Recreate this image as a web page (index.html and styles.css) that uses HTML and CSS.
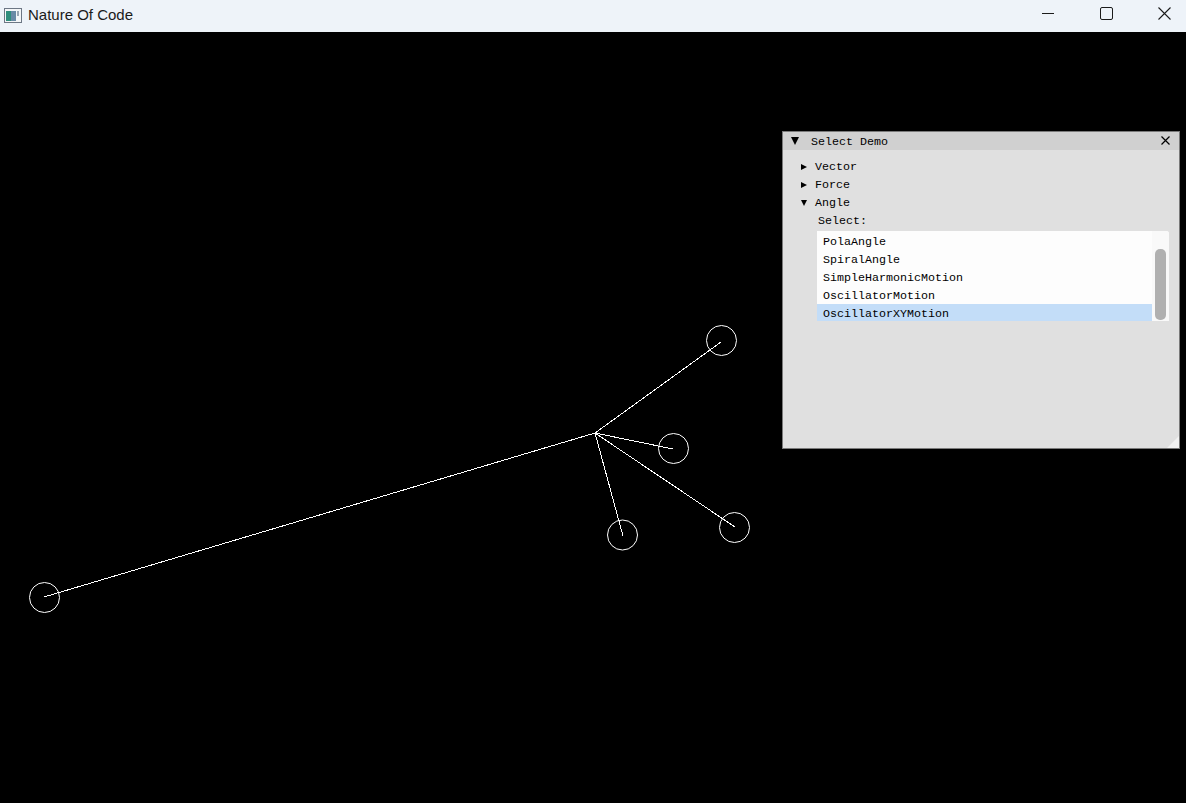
FILE: index.html
```html
<!DOCTYPE html>
<html>
<head>
<meta charset="utf-8">
<title>Nature Of Code</title>
<link rel="stylesheet" href="styles.css">
</head>
<body>
<div class="titlebar">
  <div class="app-icon">
    <svg width="18" height="15" viewBox="0 0 18 15">
      <rect x="0.5" y="0.5" width="17" height="14" fill="#f4f6f8" stroke="#6d7785"/>
      <rect x="2" y="3" width="5" height="10" fill="#2f8e7d"/>
      <rect x="7" y="3" width="5" height="10" fill="#6a8aa6"/>
      <rect x="13" y="3" width="2" height="5" fill="#9aa7b4"/>
    </svg>
  </div>
  <div class="title">Nature Of Code</div>
  <div class="controls">
    <div class="ctl"><svg width="12" height="12" viewBox="0 0 12 12"><path d="M0 6.5 H12" stroke="#1b1b1b" stroke-width="1"/></svg></div>
    <div class="ctl"><svg width="13" height="13" viewBox="0 0 13 13"><rect x="0.5" y="0.5" width="12" height="12" rx="1.5" fill="none" stroke="#1b1b1b" stroke-width="1"/></svg></div>
    <div class="ctl"><svg width="13" height="13" viewBox="0 0 13 13"><path d="M0.5 0.5 L12.5 12.5 M12.5 0.5 L0.5 12.5" stroke="#1b1b1b" stroke-width="1.1"/></svg></div>
  </div>
</div>
<div class="stage">
  <svg class="canvas" width="1186" height="771" viewBox="0 32 1186 771">
    <g stroke="#ffffff" stroke-width="1" fill="none">
      <line x1="595" y1="433" x2="44" y2="597"/>
      <line x1="595" y1="433" x2="721" y2="342"/>
      <line x1="595" y1="433" x2="673" y2="449"/>
      <line x1="595" y1="433" x2="735" y2="527"/>
      <line x1="595" y1="433" x2="623" y2="536"/>
      <circle cx="44.5" cy="597.5" r="15"/>
      <circle cx="721.5" cy="340.5" r="15"/>
      <circle cx="673.5" cy="448.5" r="15"/>
      <circle cx="734.5" cy="527.5" r="15"/>
      <circle cx="622.5" cy="535" r="15"/>
    </g>
  </svg>
  <div class="panel">
    <div class="panel-head">
      <span class="tri-down big"></span>
      <span class="head-text">Select Demo</span>
      <svg class="close" width="9" height="9" viewBox="0 0 9 9"><path d="M0.5 0.5 L8.5 8.5 M8.5 0.5 L0.5 8.5" stroke="#000" stroke-width="1.2"/></svg>
    </div>
    <div class="panel-body">
      <div class="node"><span class="tri-right"></span><span>Vector</span></div>
      <div class="node"><span class="tri-right"></span><span>Force</span></div>
      <div class="node"><span class="tri-down"></span><span>Angle</span></div>
      <div class="label">Select:</div>
      <div class="listbox">
        <div class="items">
          <div class="item">PolaAngle</div>
          <div class="item">SpiralAngle</div>
          <div class="item">SimpleHarmonicMotion</div>
          <div class="item">OscillatorMotion</div>
          <div class="item selected">OscillatorXYMotion</div>
        </div>
        <div class="scrollbar"><div class="grab"></div></div>
      </div>
    </div>
    <div class="grip"></div>
  </div>
</div>
</body>
</html>
```

FILE: styles.css
```css
* { box-sizing: border-box; }
html, body { margin: 0; padding: 0; }
body {
  width: 1186px;
  height: 803px;
  overflow: hidden;
  background: #000;
  font-family: "Liberation Mono", "DejaVu Sans Mono", monospace;
}
.titlebar {
  height: 32px;
  background: #eef3f9;
  display: flex;
  align-items: center;
  overflow: hidden;
}
.app-icon {
  width: 28px;
  padding-left: 4px;
  display: flex;
  align-items: center;
  margin-top: -2px;
}
.app-icon svg { display: block; }
.title {
  font-family: "Liberation Sans", Arial, sans-serif;
  font-size: 15px;
  color: #1a1a1a;
  flex: 1;
  margin-top: -4px;
}
.controls {
  display: flex;
  height: 32px;
  margin-right: -7px;
}
.ctl {
  width: 58px;
  display: flex;
  align-items: center;
  justify-content: center;
  margin-top: -6px;
}
.ctl svg { display: block; }
.stage {
  position: relative;
  height: 771px;
  background: #000;
}
.canvas { display: block; shape-rendering: crispEdges; }
.canvas circle { shape-rendering: auto; }
.panel {
  position: absolute;
  left: 782px;
  top: 99px;
  width: 398px;
  height: 318px;
  background: #e0e0e0;
  border: 1px solid #7a7a7a;
  font-size: 11.67px;
  color: #000;
}
.panel-head {
  height: 18px;
  background: #d0d0d0;
  display: flex;
  align-items: center;
  padding-left: 8px;
  position: relative;
}
.head-text { margin-left: 12px; padding-top: 1px; }
.close {
  position: absolute;
  right: 9px;
  top: 4px;
}
.tri-down {
  width: 0; height: 0;
  border-left: 3px solid transparent;
  border-right: 3px solid transparent;
  border-top: 6px solid #000;
  display: inline-block;
}
.tri-down.big {
  border-left-width: 4px;
  border-right-width: 4px;
  border-top-width: 8px;
}
.tri-right {
  width: 0; height: 0;
  border-top: 3px solid transparent;
  border-bottom: 3px solid transparent;
  border-left: 6px solid #000;
  display: inline-block;
}
.panel-body {
  padding: 8px 0 0 18px;
}
.node {
  height: 18px;
  display: flex;
  align-items: center;
  gap: 8px;
}
.label {
  height: 18px;
  line-height: 18px;
  padding-left: 17px;
}
.listbox {
  margin-top: 1px;
  margin-left: 16px;
  width: 352px;
  height: 90px;
  background: #fdfdfd;
  border-radius: 0 3px 0 0;
  display: flex;
  overflow: hidden;
}
.items {
  flex: 1;
  padding-top: 1px;
}
.item {
  height: 18px;
  line-height: 18px;
  padding-left: 6px;
  padding-top: 1px;
}
.item.selected { background: #c3ddf8; }
.scrollbar {
  width: 17px;
  background: #f9f9f9;
  padding: 18px 3px 1px 3px;
  display: flex;
  flex-direction: column;
  justify-content: flex-end;
}
.grab {
  height: 71px;
  background: #b0b0b0;
  border-radius: 5px;
}
.grip {
  position: absolute;
  right: 0;
  bottom: 0;
  width: 0; height: 0;
  border-left: 12px solid transparent;
  border-bottom: 12px solid #f2f2f2;
}
```
